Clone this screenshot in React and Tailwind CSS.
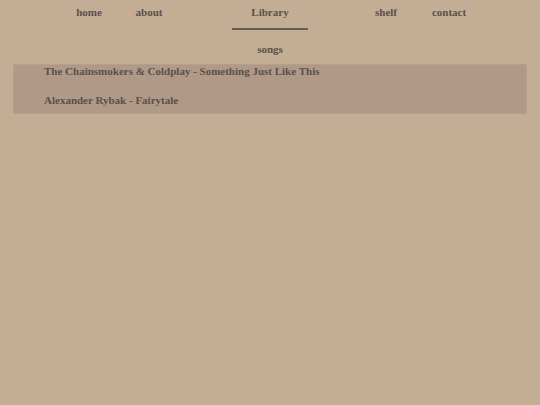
import React from 'react';

const songs = [
  'The Chainsmokers & Coldplay - Something Just Like This',
  'Alexander Rybak - Fairytale',
];

const App = () => {
  return (
    <div className="w-[540px] h-[405px] bg-[#c3ad95] text-[#5a504b] font-['Liberation_Serif',serif] font-bold text-[11px] overflow-hidden">
      {/* top nav */}
      <nav className="h-[31px] flex items-start pt-[4px]">
        <a className="ml-[69px] w-[40px] text-center">home</a>
        <a className="ml-[20px] w-[40px] text-center">about</a>
        <div className="ml-[63px] w-[76px] h-[26px] flex flex-col items-center">
          <a>Library</a>
          <div className="mt-auto w-full h-[2px] bg-[#675c57]"></div>
        </div>
        <a className="ml-[58px] w-[40px] text-center">shelf</a>
        <a className="ml-[18px] w-[50px] text-center">contact</a>
      </nav>

      <div className="text-center pt-[10px] h-[33px]">songs</div>

      <div className="mx-[13px] h-[50px] bg-[#b09a87] border border-[#b5a08c] pl-[30px] leading-[12px]">
        <div className="h-[29px]">{songs[0]}</div>
        <div>{songs[1]}</div>
      </div>
    </div>
  );
};

export default App;
